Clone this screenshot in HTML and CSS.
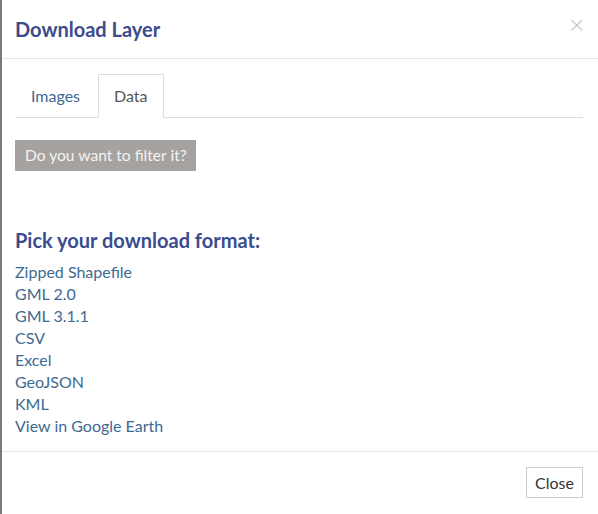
FILE: index.html
```html
<!DOCTYPE html>
<html>
<head>
<meta charset="utf-8">
<link rel="stylesheet" href="styles.css">
</head>
<body>
<div class="modal">
  <div class="modal-header">
    <h4 class="modal-title">Download Layer</h4>
    <span class="close">&times;</span>
  </div>
  <div class="modal-body">
    <ul class="tabs">
      <li class="tab">Images</li>
      <li class="tab active">Data</li>
    </ul>
    <div class="filter-row">
      <button class="filter-btn">Do you want to filter it?</button>
    </div>
    <h3 class="pick">Pick your download format:</h3>
    <ul class="formats">
      <li><a>Zipped Shapefile</a></li>
      <li><a>GML 2.0</a></li>
      <li><a>GML 3.1.1</a></li>
      <li><a>CSV</a></li>
      <li><a>Excel</a></li>
      <li><a>GeoJSON</a></li>
      <li><a>KML</a></li>
      <li><a>View in Google Earth</a></li>
    </ul>
  </div>
  <div class="modal-footer">
    <button class="close-btn">Close</button>
  </div>
</div>
</body>
</html>
```

FILE: styles.css
```css
html, body {
  margin: 0;
  padding: 0;
  background: #fff;
}
body {
  font-family: Lato, "Open Sans", sans-serif;
  font-size: 16px;
  color: #333;
}
.modal {
  width: 598px;
  height: 514px;
  border-left: 2px solid #7a7a7a;
  box-sizing: border-box;
  background: #fff;
}
.modal-header {
  display: flex;
  align-items: center;
  justify-content: space-between;
  padding: 15px 15px 15px 13px;
  height: 59px;
  box-sizing: border-box;
  border-bottom: 1px solid #e5e5e5;
}
.modal-title {
  margin: 0;
  font-size: 20px;
  font-weight: 700;
  color: #3b4c8e;
  line-height: 26px;
}
.close {
  font-size: 22px;
  color: #c4c4c4;
  line-height: 1;
  margin-top: -8px;
  margin-right: -3px;
  font-family: "DejaVu Sans", sans-serif;
  font-weight: 300;
}
.modal-body {
  padding: 15px 15px 14px 13px;
}
.tabs {
  list-style: none;
  margin: 0;
  padding: 0;
  display: flex;
  border-bottom: 1px solid #ddd;
}
.tab {
  padding: 10px 15px;
  line-height: 22px;
  margin-right: 2px;
  margin-bottom: -1px;
  border: 1px solid transparent;
  color: #3d6a91;
}
.tab.active {
  border-color: #ddd #ddd transparent #ddd;
  background: #fff;
  color: #555;
}
.filter-row {
  margin-top: 22px;
  display: flex;
}
.filter-btn {
  font-family: Lato, sans-serif;
  font-size: 15.6px;
  background: #a5a29f;
  color: #f4f4f4;
  border: none;
  padding: 6px 9px 6px 10px;
  line-height: 19px;
  cursor: pointer;
}
.pick {
  margin: 58px 0 10px 0;
  font-size: 20px;
  font-weight: 700;
  color: #3b4c8e;
  line-height: 22px;
}
.formats {
  list-style: none;
  margin: 0;
  padding: 0;
}
.formats li {
  line-height: 22px;
}
.formats a {
  color: #3d6a91;
  font-size: 16px;
}
.modal-footer {
  display: flex;
  justify-content: flex-end;
  padding: 15px 15px 15px 15px;
  border-top: 1px solid #e5e5e5;
}
.close-btn {
  font-family: Lato, sans-serif;
  font-size: 16px;
  color: #333;
  background: #fff;
  border: 1px solid #ccc;
  padding: 5px 8px;
  line-height: 19px;
}
```
